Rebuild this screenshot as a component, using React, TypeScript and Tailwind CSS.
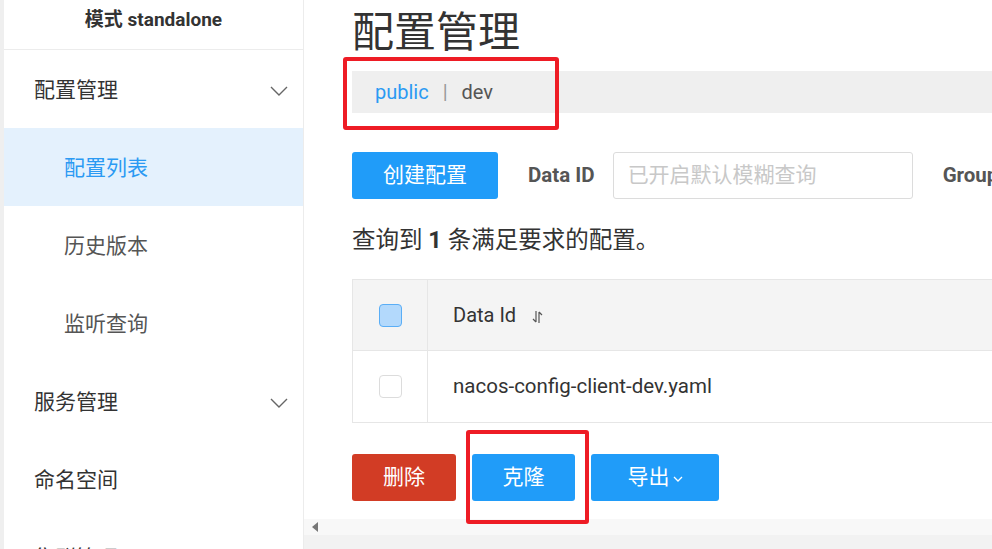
import React from "react";

const cjk = { fontFamily: 'Roboto, "Noto Sans CJK SC", sans-serif' };

function Chevron() {
  return (
    <svg width="18" height="10" viewBox="0 0 18 10" fill="none">
      <path d="M1 1 L9 9 L17 1" stroke="#666" strokeWidth="1.4" />
    </svg>
  );
}

function SortIcon() {
  return (
    <svg width="14" height="16" viewBox="0 0 14 16" fill="none">
      <path d="M5 2 V13 M5 13 L2 10" stroke="#555" strokeWidth="1.2" />
      <path d="M8 14 V3 M8 3 L11 6" stroke="#555" strokeWidth="1.2" />
    </svg>
  );
}

export default function App() {
  const menu: { label: string; sub?: boolean; active?: boolean; chevron?: boolean }[] = [
    { label: "配置管理", chevron: true },
    { label: "配置列表", sub: true, active: true },
    { label: "历史版本", sub: true },
    { label: "监听查询", sub: true },
    { label: "服务管理", chevron: true },
    { label: "命名空间" },
    { label: "集群管理", chevron: true },
  ];
  return (
    <div className="w-[992px] h-[549px] overflow-hidden flex bg-white text-[#333]" style={cjk}>
      <div className="w-[4px] h-full bg-[#efefef] shrink-0" />
      <div className="w-[300px] shrink-0 h-full border-r border-[#ececec] bg-white flex flex-col">
        <div className="h-[50px] shrink-0 border-b border-[#ececec] flex items-center justify-center text-[19px] font-bold text-[#333] pb-[8px]">
          模式 standalone
        </div>
        {menu.map((m) => (
          <div
            key={m.label}
            className={`h-[78px] shrink-0 flex items-center justify-between pr-[15px] pt-[3px] text-[21px] ${
              m.sub ? "pl-[60px]" : "pl-[30px]"
            } ${m.active ? "bg-[#e4f1fd] text-[#2b9af3]" : m.sub ? "text-[#555]" : "text-[#333]"}`}
          >
            <span>{m.label}</span>
            {m.chevron && <Chevron />}
          </div>
        ))}
      </div>
      <div className="flex-1 h-full relative flex flex-col overflow-hidden">
        <div className="h-[519px] shrink-0 overflow-hidden pl-[48px]">
          <div className="w-[800px]">
            <div className="mt-[10px] h-[46px] text-[42px] leading-[46px] text-[#333]">配置管理</div>
            <div className="mt-[15px] h-[42px] bg-[#efefef] flex items-center pl-[23px] text-[20px]">
              <span className="text-[#2b9af3]">public</span>
              <span className="text-[#999] mx-[14px]">|</span>
              <span className="text-[#555]">dev</span>
            </div>
            <div className="mt-[39px] h-[47px] flex items-center">
              <div className="w-[146px] h-[47px] rounded-[3px] bg-[#209cf9] text-white text-[21px] flex items-center justify-center">
                创建配置
              </div>
              <div className="ml-[30px] text-[20.5px] font-bold text-[#555]">Data ID</div>
              <div className="ml-[18px] w-[300px] h-[47px] border border-[#dcdcdc] rounded-[3px] flex items-center pl-[14px] text-[21px] text-[#c8c8c8]">
                已开启默认模糊查询
              </div>
              <div className="ml-[30px] text-[20.5px] font-bold text-[#555]">Group</div>
            </div>
            <div className="mt-[25px] h-[32px] leading-[32px] text-[23.5px] text-[#333]">
              查询到 <span className="font-bold">1</span> 条满足要求的配置。
            </div>
            <div className="mt-[23px] border border-[#e6e6e6]">
              <div className="h-[71px] bg-[#f4f4f4] flex border-b border-[#e6e6e6]">
                <div className="w-[75px] border-r border-[#e6e6e6] flex items-center justify-center">
                  <div className="w-[23px] h-[23px] rounded-[4px] bg-[#b3d9fc] border border-[#5aaef6]" />
                </div>
                <div className="flex items-center pl-[25px] text-[20px] text-[#333]">
                  Data Id
                  <span className="ml-[15px] mt-[3px] flex">
                    <SortIcon />
                  </span>
                </div>
              </div>
              <div className="h-[71px] flex">
                <div className="w-[75px] border-r border-[#e6e6e6] flex items-center justify-center">
                  <div className="w-[23px] h-[23px] rounded-[4px] bg-white border border-[#dcdcdc]" />
                </div>
                <div className="flex items-center pl-[25px] text-[20.5px] text-[#333]">
                  nacos-config-client-dev.yaml
                </div>
              </div>
            </div>
            <div className="mt-[31px] flex gap-[16px]">
              <div className="w-[104px] h-[47px] rounded-[3px] bg-[#d23c25] text-white text-[21px] flex items-center justify-center">
                删除
              </div>
              <div className="w-[103px] h-[47px] rounded-[3px] bg-[#209cf9] text-white text-[21px] flex items-center justify-center">
                克隆
              </div>
              <div className="w-[128px] h-[47px] rounded-[3px] bg-[#209cf9] text-white text-[21px] flex items-center justify-center">
                导出
                <svg className="ml-[3px] mt-[2px]" width="10" height="6" viewBox="0 0 10 6" fill="none">
                  <path d="M1 1 L5 5 L9 1" stroke="white" strokeWidth="1.3" />
                </svg>
              </div>
            </div>
          </div>
        </div>
        <div className="h-[16px] shrink-0 bg-[#f8f8f8] flex items-center pl-[8px]">
          <div className="w-0 h-0 border-t-[5px] border-b-[5px] border-r-[6px] border-t-transparent border-b-transparent border-r-[#777]" />
        </div>
        <div className="flex-1 bg-[#f2f2f2]" />
        <div className="absolute left-[39px] top-[57px] w-[216px] h-[73px] border-[4px] border-[#ee1c25] rounded-[3px]" />
        <div className="absolute left-[162px] top-[430px] w-[123px] h-[94px] border-[4px] border-[#ee1c25] rounded-[3px]" />
      </div>
    </div>
  );
}
